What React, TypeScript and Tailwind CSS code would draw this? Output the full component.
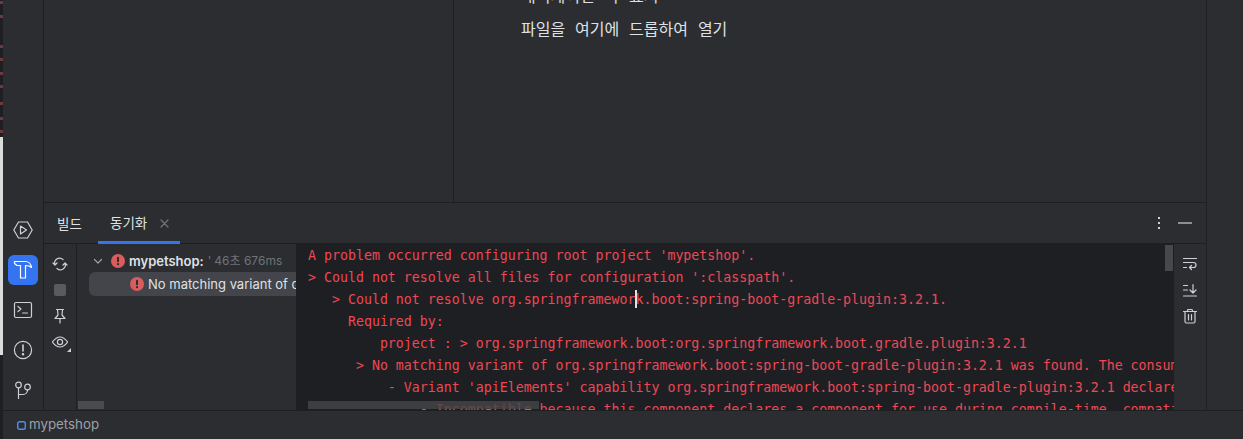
import type { ReactNode } from "react";

const uiFont = "font-['Inter','Noto_Sans_CJK_KR',sans-serif]";

const logLines = [
  "A problem occurred configuring root project 'mypetshop'.",
  "> Could not resolve all files for configuration ':classpath'.",
  "   > Could not resolve org.springframework.boot:spring-boot-gradle-plugin:3.2.1.",
  "     Required by:",
  "         project : > org.springframework.boot:org.springframework.boot.gradle.plugin:3.2.1",
  "      > No matching variant of org.springframework.boot:spring-boot-gradle-plugin:3.2.1 was found. The consumer was configured",
  "          - Variant 'apiElements' capability org.springframework.boot:spring-boot-gradle-plugin:3.2.1 declares a library",
  "              - Incompatible because this component declares a component for use during compile-time, compatible with Java 17",
];

const specks = [1, 11, 27, 10, 11, 10, 14, 12, 10];

function Icon({ size = 20, children, className = "" }: { size?: number; children: ReactNode; className?: string }) {
  return (
    <svg
      width={size}
      height={size}
      viewBox={`0 0 ${size} ${size}`}
      fill="none"
      stroke="currentColor"
      strokeWidth="1.2"
      strokeLinecap="round"
      strokeLinejoin="round"
      className={`shrink-0 ${className}`}
    >
      {children}
    </svg>
  );
}

function ErrorDot() {
  return (
    <svg width="14" height="14" viewBox="0 0 14 14" className="shrink-0">
      <circle cx="7" cy="7" r="7" fill="#db5c5c" />
      <rect x="6" y="2.8" width="2" height="5.4" rx="1" fill="#2b2d30" />
      <circle cx="7" cy="10.2" r="1.1" fill="#2b2d30" />
    </svg>
  );
}

function SideBar() {
  return (
    <div className="flex w-[41px] shrink-0 flex-col items-center justify-end gap-[10px] border-r border-[#1e1f22] pb-[5px] text-[#ced0d6]">
      <div className="flex h-[30px] w-[30px] items-center justify-center">
        <Icon>
          <path d="M0.8 10 L5.5 2 H14.5 L19.2 10 L14.5 18 H5.5 Z" />
          <path d="M7.5 6 L13.5 10 L7.5 14 Z" />
        </Icon>
      </div>
      <div className="flex h-[30px] w-[30px] items-center justify-center rounded-[6px] bg-[#3574f0] text-white">
        <Icon>
          <path d="M1.5 1.5 H12.5 C15.5 1.5 18 4 18.5 7.5 C17 5.9 15 5.5 12.5 5.5 V18 H7.5 V5.5 H4 L1.5 3.5 Z" />
        </Icon>
      </div>
      <div className="flex h-[30px] w-[30px] items-center justify-center">
        <Icon>
          <rect x="1.5" y="2.5" width="17" height="15" rx="1.5" />
          <path d="M5 6.5 L8 9 L5 11.5 M9.5 13 H14.5" />
        </Icon>
      </div>
      <div className="flex h-[30px] w-[30px] items-center justify-center">
        <Icon>
          <circle cx="10" cy="10" r="8.6" />
          <path d="M10 5 V11" strokeWidth="1.6" />
          <circle cx="10" cy="14.3" r="0.7" fill="currentColor" />
        </Icon>
      </div>
      <div className="flex h-[30px] w-[30px] items-center justify-center">
        <Icon>
          <circle cx="5.5" cy="5" r="2.8" />
          <circle cx="14.5" cy="7" r="2.8" />
          <path d="M5.5 8 V18.5 M5.5 14.5 H10 A4.5 4.5 0 0 0 14.5 10" />
        </Icon>
      </div>
    </div>
  );
}

function LeftTools() {
  return (
    <div className="flex w-[33px] shrink-0 flex-col items-center gap-[10px] border-r border-[#1e1f22] pt-[12px] text-[#ced0d6]">
      <Icon size={16}>
        <path d="M3 9 A5 5 0 0 1 11 3.5 M1 7 L3 9 L5 7" />
        <path d="M13 7 A5 5 0 0 1 5 12.5 M11 9 L13 7 L15 9" />
      </Icon>
      <div className="flex h-4 w-4 items-center justify-center">
        <div className="h-[12px] w-[12px] rounded-[2px] bg-[#5a5b5e]" />
      </div>
      <Icon size={16}>
        <path d="M4.5 1.5 H11.5 M5.5 1.5 L6 7 L3 10.5 H13 L10 7 L10.5 1.5 M8 10.5 V15" />
      </Icon>
      <div className="relative h-4 w-4">
        <Icon size={16}>
          <path d="M0.4 8 C3 4.5 5.5 3 8 3 C10.5 3 13 4.5 15.6 8 C13 11.5 10.5 13 8 13 C5.5 13 3 11.5 0.4 8 Z" />
          <circle cx="8" cy="8" r="2.6" />
        </Icon>
        <div className="absolute bottom-[-2px] right-[-3px] h-0 w-0 border-b-[4px] border-l-[4px] border-b-[#ced0d6] border-l-transparent" />
      </div>
    </div>
  );
}

function BuildTree() {
  return (
    <div className={`relative w-[219px] shrink-0 overflow-hidden pt-[6px] text-[13px] leading-[22px] ${uiFont}`}>
      <div className="flex h-[22px] items-center whitespace-nowrap pl-[14px]">
        <Icon size={14} className="text-[#9da0a8]">
          <path d="M3.5 5.5 L7 9 L10.5 5.5" />
        </Icon>
        <div className="ml-[6px]">
          <ErrorDot />
        </div>
        <span className="ml-[4px] font-semibold text-[#dfe1e5]">mypetshop:</span>
        <span className="ml-[4px] text-[12px] text-[#6f737a]">'</span>
        <span className="ml-[3px] text-[12px] text-[#6f737a]">46초 676ms</span>
      </div>
      <div className="ml-[12px] flex h-[24px] w-[260px] items-center whitespace-nowrap rounded-l-[6px] bg-[#43454a] pl-[41px] text-[#dfe1e5]">
        <ErrorDot />
        <span className="ml-[4px]">No matching variant of org</span>
      </div>
      <div className="absolute bottom-[1px] left-[1px] h-[8px] w-[26px] bg-[#4a4b4e]" />
    </div>
  );
}

function LogOutput() {
  return (
    <div className="relative min-w-0 flex-1 overflow-hidden bg-[#1e1f22] pl-[12px] pt-px">
      {logLines.map((line) => (
        <div
          key={line}
          className="h-[22px] whitespace-pre font-['DejaVu_Sans_Mono',monospace] text-[13.28px] leading-[22px] text-[#ee4855]"
        >
          {line}
        </div>
      ))}
      <div className="absolute left-[339px] top-[46px] h-[18px] w-[2px] bg-[#dfe1e5]" />
      <div className="absolute left-[12px] top-[157px] h-[8px] w-[231px] bg-[#454648]/80" />
      <div className="absolute right-[1px] top-[1px] h-[26px] w-[8px] bg-[#47484b]" />
    </div>
  );
}

function RightTools() {
  return (
    <div className="flex w-[32px] shrink-0 flex-col items-center gap-[10px] pt-[12px] text-[#ced0d6]">
      <Icon size={16}>
        <path d="M1.5 2.5 H14.5 M1.5 6.5 H11.5 A2.5 2.5 0 0 1 11.5 11.5 H7.5 M9.5 9.5 L7.5 11.5 L9.5 13.5 M1.5 11.5 H4.5" />
      </Icon>
      <Icon size={16}>
        <path d="M1.5 14 H14.5 M1.5 3.5 H5.5 M1.5 8 H5.5 M11 2.5 V10.5 M8 8 L11 11 L14 8" />
      </Icon>
      <Icon size={16}>
        <path d="M1.5 3.5 H14.5 M5.5 3.5 V2.5 A1 1 0 0 1 6.5 1.5 H9.5 A1 1 0 0 1 10.5 2.5 V3.5 M3 3.5 V13.5 A1.5 1.5 0 0 0 4.5 15 H11.5 A1.5 1.5 0 0 0 13 13.5 V3.5 M6.5 6.5 V12 M9.5 6.5 V12" />
      </Icon>
    </div>
  );
}

export default function App() {
  return (
    <div className={`flex h-[439px] w-[1243px] overflow-hidden bg-[#2b2d30] ${uiFont}`}>
      {/* what is left of the window behind this one */}
      <div className="flex w-[3px] shrink-0 flex-col bg-[#1e1f22]">
        <div className="h-[137px] shrink-0">
          {specks.map((gap, i) => (
            <div key={i} className="h-[3px] bg-[#6e3a3e]" style={{ marginTop: gap }} />
          ))}
        </div>
        <div className="h-[218px] shrink-0 bg-[#dcdcdc]" />
      </div>
      <div className="flex min-w-0 flex-1 flex-col">
        <div className="flex h-[410px] shrink-0">
          <SideBar />
          <div className="flex min-w-0 flex-1 flex-col border-r border-[#1e1f22]">
            <div className="flex h-[203px] shrink-0 border-b border-[#1e1f22]">
              <div className="w-[410px] shrink-0 border-r border-[#1e1f22]" />
              <div className="min-w-0 flex-1 overflow-hidden pl-[67px] text-[16px] leading-[22px] text-[#dfe1e5] [word-spacing:5.4px]">
                <div className="-mt-[15px] whitespace-nowrap">내비게이션 바 표시</div>
                <div className="mt-[11px] whitespace-nowrap">파일을 여기에 드롭하여 열기</div>
              </div>
            </div>
            <div className="flex h-[41px] shrink-0 items-stretch border-b border-[#1e1f22] text-[13.5px] text-[#dfe1e5]">
              <div className="flex w-[54px] items-center pl-[13px] pt-[2px]">빌드</div>
              <div className="-mb-px flex w-[82px] items-center gap-[13px] border-b-[3px] border-[#3574f0] pl-[12px] pt-[2px]">
                <span>동기화</span>
                <Icon size={9} className="text-[#6f737a]">
                  <path d="M1 1 L8 8 M8 1 L1 8" />
                </Icon>
              </div>
              <div className="flex flex-1 items-center justify-end gap-[18px] pr-[14px]">
                <div className="flex flex-col gap-[3px]">
                  <div className="h-[2px] w-[2px] bg-[#ced0d6]" />
                  <div className="h-[2px] w-[2px] bg-[#ced0d6]" />
                  <div className="h-[2px] w-[2px] bg-[#ced0d6]" />
                </div>
                <div className="h-[2px] w-[14px] bg-[#8c8e93]" />
              </div>
            </div>
            <div className="flex min-h-0 flex-1">
              <LeftTools />
              <BuildTree />
              <LogOutput />
              <RightTools />
            </div>
          </div>
          <div className="w-[36px] shrink-0" />
        </div>
        <div className="flex flex-1 items-center gap-[3px] border-t border-[#1e1f22] pl-[14px] text-[13.3px] text-[#9da0a8]">
          <svg width="9" height="9" viewBox="0 0 9 9" fill="none" className="shrink-0">
            <rect x="0.7" y="0.7" width="7.6" height="7.6" rx="1.8" stroke="#548af7" strokeWidth="1.4" />
          </svg>
          <span>mypetshop</span>
        </div>
      </div>
    </div>
  );
}
